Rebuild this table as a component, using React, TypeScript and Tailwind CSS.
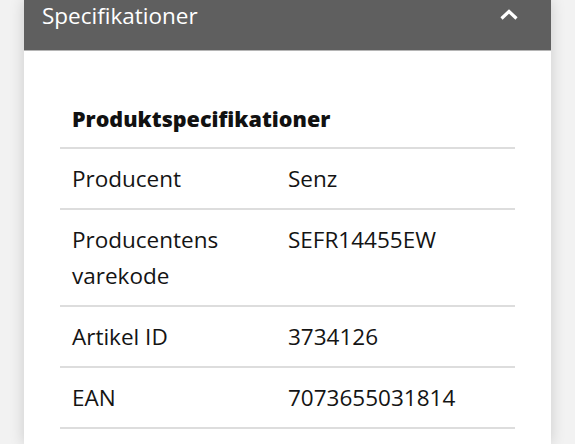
import React from "react";

const rows: { label: string; value: string }[] = [
  { label: "Producent", value: "Senz" },
  { label: "Producentens varekode", value: "SEFR14455EW" },
  { label: "Artikel ID", value: "3734126" },
  { label: "EAN", value: "7073655031814" },
];

export default function App() {
  return (
    <div
      className="w-[575px] h-[444px] overflow-hidden bg-[#f2f2f2] px-[24px] [font-variant-ligatures:none]"
      style={{ fontFamily: "'Open Sans', Lato, sans-serif" }}
    >
      <div className="h-full bg-white shadow-[0_0_14px_rgba(0,0,0,0.16)]">
        <div className="h-[51px] bg-[#5f5f5f] border-b border-[#b5b5b5] flex items-start justify-between pl-[18px] pr-[32px]">
          <span className="text-white text-[22.5px] leading-[31px]">Specifikationer</span>
          <svg width="20" height="13" viewBox="0 0 20 13" className="mt-[8px]">
            <path d="M2.5 10.5 L10 3.5 L17.5 10.5" fill="none" stroke="#fff" strokeWidth="3.2" />
          </svg>
        </div>
        <div className="px-[36px] pt-[53px]">
          <div className="px-[12px] text-[21.5px] font-extrabold text-[#111] leading-[30px] mb-[13px]">
            Produktspecifikationer
          </div>
          <div className="border-b-2 border-[#dddddd]">
            {rows.map((r) => (
              <div key={r.label} className="flex border-t-2 border-[#dddddd] pt-[12px] pb-[11px] text-[22.5px] leading-[36px] text-[#141414]">
                <div className="w-[216px] pl-[12px] pr-[10px]">{r.label}</div>
                <div className="flex-1 pl-[12px]">{r.value}</div>
              </div>
            ))}
          </div>
        </div>
      </div>
    </div>
  );
}
